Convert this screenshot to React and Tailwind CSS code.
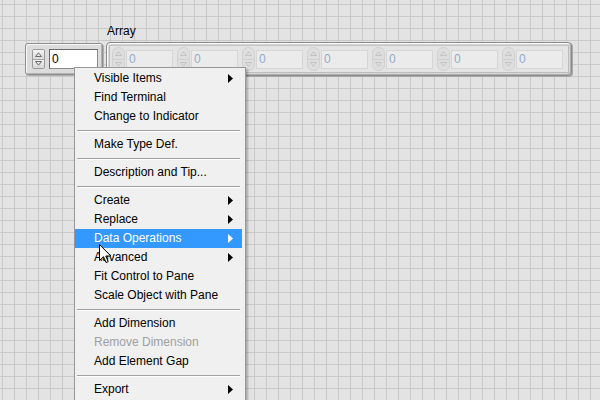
import React from "react";

const font = { fontFamily: '"Liberation Sans", Arial, sans-serif' };

function SpinBtn({ up, faint }) {
  const c = faint ? "#c4c4c4" : "#6a6a6a";
  return (
    <svg width="7" height="5" viewBox="0 0 7 5">
      {up ? (
        <path d="M0.5 4.5 L3.5 0.8 L6.5 4.5 Z" fill="none" stroke={c} strokeWidth="1" />
      ) : (
        <path d="M0.5 0.5 L3.5 4.2 L6.5 0.5 Z" fill="none" stroke={c} strokeWidth="1" />
      )}
    </svg>
  );
}

function IndexSpinner() {
  return (
    <div className="flex flex-col w-[13px] h-[20px] rounded-[2px] border border-[#9a9a9a] bg-[#e2e2e2] overflow-hidden">
      <div className="flex-1 flex items-center justify-center border-b border-[#a8a8a8] bg-gradient-to-b from-[#f4f4f4] to-[#dcdcdc]">
        <SpinBtn up />
      </div>
      <div className="flex-1 flex items-center justify-center bg-gradient-to-b from-[#f0f0f0] to-[#d8d8d8]">
        <SpinBtn />
      </div>
    </div>
  );
}

function FaintSpinner() {
  return (
    <div className="flex flex-col w-[13px] h-[24px] rounded-[6px] border border-[#d2d2d2] bg-[#dedede] overflow-hidden">
      <div className="flex-1 flex items-center justify-center border-b border-[#d0d0d0]">
        <SpinBtn up faint />
      </div>
      <div className="flex-1 flex items-center justify-center">
        <SpinBtn faint />
      </div>
    </div>
  );
}

function ArrayElement() {
  return (
    <div className="flex items-center gap-[1px] shrink-0">
      <FaintSpinner />
      <div className="w-[47px] h-[19px] bg-[#ebebeb] border border-[#d6d6d6] pl-[2px] text-[12px] leading-[17px] text-[#93aacb]">
        0
      </div>
    </div>
  );
}

function Item({ label, arrow, highlight, disabled }) {
  return (
    <div
      className={
        "h-[19px] flex items-center justify-between pl-[19px] pr-[9px] text-[12px] leading-[19px] " +
        (highlight ? "bg-[#3399ff] text-white" : disabled ? "text-[#a0a0a0]" : "text-black")
      }
    >
      <span>{label}</span>
      {arrow && (
        <svg width="5" height="9" viewBox="0 0 5 9">
          <path d="M0 0 L5 4.5 L0 9 Z" fill={highlight ? "#ffffff" : "#000000"} />
        </svg>
      )}
    </div>
  );
}

function Sep() {
  return (
    <div className="h-[9px] flex flex-col justify-center pl-[2px] pr-[2px]">
      <div className="h-[1px] bg-[#a0a0a0]" />
      <div className="h-[1px] bg-white" />
    </div>
  );
}

export default function App() {
  const elems = [0, 1, 2, 3, 4, 5, 6];
  return (
    <div
      style={font}
      className="relative w-[600px] h-[400px] overflow-hidden bg-[#e3e3e3] [background-image:linear-gradient(to_right,#c9c9c9_1px,transparent_1px),linear-gradient(to_bottom,#c9c9c9_1px,transparent_1px)] [background-size:12px_12px] [background-position:2px_4px]"
    >
      {/* Array label */}
      <div className="absolute left-[107px] top-[24px] text-[12px] leading-[14px] text-black">Array</div>

      {/* Index control */}
      <div className="absolute left-[25px] top-[43px] w-[78px] h-[32px] rounded-[3px] border border-[#8e8e8e] bg-[#dcdcdc] shadow-[inset_1px_1px_0_#f8f8f8,inset_-1px_-1px_0_#b4b4b4,1px_1px_0_#b0b0b0] flex items-center pl-[6px] gap-[4px]">
        <IndexSpinner />
        <div className="w-[49px] h-[20px] bg-white border border-[#8a8a8a] border-t-[#6a6a6a] border-l-[#6a6a6a] pl-[2px] text-[12px] leading-[18px] text-black">
          0
        </div>
      </div>

      {/* Array frame */}
      <div className="absolute left-[106px] top-[42px] w-[466px] h-[34px] rounded-[4px] border border-[#8a8a8a] bg-[#d6d6d6] shadow-[inset_1px_1px_0_#fafafa,inset_-1px_-1px_0_#b0b0b0,1px_1px_0_#a8a8a8] p-[2px]">
        <div className="w-full h-full border border-[#bdbdbd] border-t-[#c4c4c4] bg-[#e4e4e4] flex items-center pl-[2px] gap-[4px]">
          {elems.map((i) => (
            <ArrayElement key={i} />
          ))}
        </div>
      </div>

      {/* Context menu */}
      <div className="absolute left-[74px] top-[67px] w-[172px] h-[345px] bg-[#f0f0f0] border border-[#979797] pt-[1px] pr-[3px] shadow-[2px_2px_2px_rgba(0,0,0,0.25)]">
        <Item label="Visible Items" arrow />
        <Item label="Find Terminal" />
        <Item label="Change to Indicator" />
        <Sep />
        <Item label="Make Type Def." />
        <Sep />
        <Item label="Description and Tip..." />
        <Sep />
        <Item label="Create" arrow />
        <Item label="Replace" arrow />
        <Item label="Data Operations" arrow highlight />
        <Item label="Advanced" arrow />
        <Item label="Fit Control to Pane" />
        <Item label="Scale Object with Pane" />
        <Sep />
        <Item label="Add Dimension" />
        <Item label="Remove Dimension" disabled />
        <Item label="Add Element Gap" />
        <Sep />
        <Item label="Export" arrow />
      </div>

      {/* Mouse cursor */}
      <svg className="absolute left-[99px] top-[244px]" width="13" height="20" viewBox="0 0 13 20">
        <path d="M0.5 0.5 V16.5 L4.5 12.7 L7 18.5 L9.2 17.6 L6.8 12 H11.8 Z" fill="white" stroke="black" strokeWidth="1" strokeLinejoin="miter" />
      </svg>
    </div>
  );
}
